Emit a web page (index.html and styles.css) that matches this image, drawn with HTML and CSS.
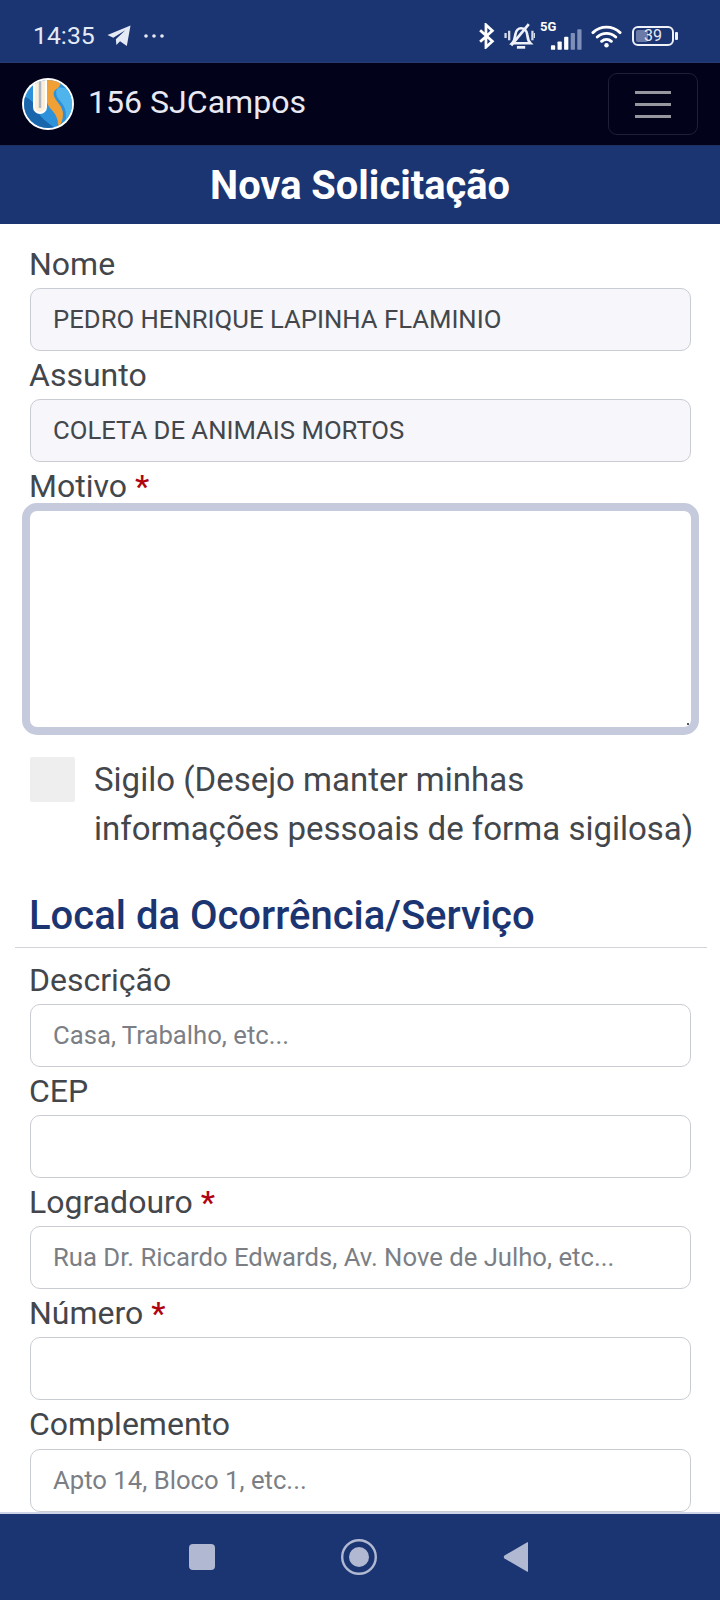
FILE: index.html
```html
<!DOCTYPE html>
<html lang="pt-BR">
<head>
<meta charset="utf-8">
<title>Nova Solicitação</title>
<link rel="stylesheet" href="styles.css">
</head>
<body>
<div class="screen">
  <div class="status">
    <div class="status-left">
      <span class="time">14:35</span>
      <svg class="ic-tg" viewBox="0 0 24 22"><path d="M1 10.5 23 1.5 19.5 21 13 16.5 9.5 20 9 14.5 18 6 6.5 13.2Z" fill="#e6eaf5"/></svg>
      <svg class="ic-dots" viewBox="0 0 22 6"><circle cx="3" cy="3" r="1.8" fill="#e6eaf5"/><circle cx="11" cy="3" r="1.8" fill="#e6eaf5"/><circle cx="19" cy="3" r="1.8" fill="#e6eaf5"/></svg>
    </div>
    <div class="status-right">
      <svg class="ic-bt" viewBox="0 0 16 24"><path d="M2 6.5 13.5 17 7.5 22.5V1.5L13.5 7 2 17.5" fill="none" stroke="#fff" stroke-width="2.6"/></svg>
      <svg class="ic-bell" viewBox="0 0 30 26"><path d="M8 20c2.500-2.500 2.500-5.500 3-8.500.6-3.500 3-6 5.500-6 3 0 5.500 2.500 6 6 .5 3 .5 6 3 8.500Z" fill="none" stroke="#eef1f8" stroke-width="2.600"/><path d="M12.500 24h8" stroke="#eef1f8" stroke-width="2.600"/><path d="M7 22 24 1.500" stroke="#eef1f8" stroke-width="2.600"/><path d="M5 8v9M1.500 10v5M27.500 8v9M30 10v5" stroke="#d5dbea" stroke-width="2.200"/></svg>
      <div class="net">
        <span class="net-label">5G</span>
        <svg class="ic-signal" viewBox="0 0 34 22"><rect x="1" y="17" width="4.500" height="5" rx="1" fill="#fff"/><rect x="8" y="13" width="4.500" height="9" rx="1" fill="#fff"/><rect x="15" y="8" width="4.500" height="14" rx="1" fill="#fff"/><rect x="22" y="4" width="4.500" height="18" rx="1" fill="#7f8fb8"/><rect x="29" y="0" width="4.500" height="22" rx="1" fill="#7f8fb8"/></svg>
      </div>
      <svg class="ic-wifi" viewBox="0 0 32 24"><path d="M2 8.500c8-7.500 20-7.500 28 0M6.500 13c5.500-5 13.500-5 19 0M11 17.500c3-2.700 7-2.700 10 0" fill="none" stroke="#fff" stroke-width="3" stroke-linecap="round"/><circle cx="16" cy="21.500" r="2.300" fill="#fff"/></svg>
      <div class="battery">
        <div class="battery-body"><span class="battery-level"></span><span class="battery-num">39</span></div>
        <span class="battery-tip"></span>
      </div>
    </div>
  </div>

  <nav class="navbar">
    <div class="brand">
      <svg class="logo" viewBox="0 0 52 52">
        <defs><clipPath id="logo-clip"><circle cx="26" cy="26" r="24"/></clipPath></defs>
        <circle cx="26" cy="26" r="26" fill="#fff"/>
        <g clip-path="url(#logo-clip)">
          <rect width="52" height="52" fill="#2d92da"/>
          <path d="M0 18C8 20 12 24 16 34 20 42 28 46 36 52H0Z" fill="#1a66ad"/>
          <path d="M24 0H39C40 4 38 8 36 10 32 12 31 15 32 18 34 24 41 28 41 36 41 42 39 46 36 50 37 42 34 36 28 30 24 25 23 18 24 12Z" fill="#f0a034"/>
          <path d="M36 10C44 8 51 14 51 24 51 34 48 42 42 48 46 38 44 30 39 24 35 20 32 14 36 10Z" fill="#4fb4ec"/>
          <path d="M12 1V29A6 6 0 0 0 24 29V1Z" fill="#fbeed8" stroke="#fff" stroke-width="2"/>
          <path d="M18 2V30" stroke="#aeb8c4" stroke-width="2.500"/>
        </g>
      </svg>
      <span class="brand-name">156 SJCampos</span>
    </div>
    <div class="toggler">
      <span class="bar"></span><span class="bar"></span><span class="bar"></span>
    </div>
  </nav>

  <header class="title-bar"><h1 class="title">Nova Solicitação</h1></header>

  <main class="form">
    <div class="field">
      <label class="label">Nome</label>
      <div class="input input-ro">PEDRO HENRIQUE LAPINHA FLAMINIO</div>
    </div>
    <div class="field">
      <label class="label">Assunto</label>
      <div class="input input-ro">COLETA DE ANIMAIS MORTOS</div>
    </div>
    <div class="field">
      <label class="label">Motivo <span class="req">*</span></label>
      <div class="textarea"><span class="grip"></span></div>
    </div>
    <div class="check-row">
      <span class="check"></span>
      <span class="check-text">Sigilo (Desejo manter minhas informações pessoais de forma sigilosa)</span>
    </div>
    <h2 class="section">Local da Ocorrência/Serviço</h2>
    <div class="field">
      <label class="label">Descrição</label>
      <div class="input input-ph">Casa, Trabalho, etc...</div>
    </div>
    <div class="field">
      <label class="label">CEP</label>
      <div class="input"></div>
    </div>
    <div class="field">
      <label class="label">Logradouro <span class="req">*</span></label>
      <div class="input input-ph">Rua Dr. Ricardo Edwards, Av. Nove de Julho, etc...</div>
    </div>
    <div class="field">
      <label class="label">Número <span class="req">*</span></label>
      <div class="input"></div>
    </div>
    <div class="field">
      <label class="label">Complemento</label>
      <div class="input input-ph">Apto 14, Bloco 1, etc...</div>
    </div>
  </main>

  <footer class="sysnav">
    <span class="nav-square"></span>
    <svg class="nav-circle" viewBox="0 0 36 36"><circle cx="18" cy="18" r="16.800" fill="none" stroke="#b1b9d2" stroke-width="2.400"/><circle cx="18" cy="18" r="10" fill="#b1b9d2"/></svg>
    <svg class="nav-back" viewBox="0 0 25 30"><path d="M25 0V30L23 29 1.500 16.500Q0 15 1.500 13.500L23 1Z" fill="#b1b9d2"/></svg>
  </footer>
</div>
</body>
</html>
```

FILE: styles.css
```css
* { box-sizing: border-box; }
html, body { margin: 0; padding: 0; background: #fff; }
body { font-family: Roboto, "Liberation Sans", sans-serif; }
.screen { width: 720px; height: 1600px; display: flex; flex-direction: column; overflow: hidden; }

.status { height: 62px; flex: none; background: #1b3572; display: flex; justify-content: space-between; align-items: center; padding: 9px 42px 0 33px; color: #e6eaf5; }
.status-left { display: flex; align-items: center; }
.time { font-size: 24.800px; font-weight: 400; }
.ic-tg { width: 26px; height: 23px; margin-left: 11px; }
.ic-dots { width: 22px; height: 6px; margin-left: 11px; }
.status-right { display: flex; align-items: center; }
.ic-bt { width: 17px; height: 26px; }
.ic-bell { width: 31px; height: 28px; margin-left: 9px; }
.net { position: relative; width: 42px; height: 28px; margin-left: 5px; }
.net-label { position: absolute; left: 0; top: -3px; font-size: 13px; font-weight: 700; color: #fff; }
.ic-signal { position: absolute; right: 0; bottom: 0; width: 32px; height: 21px; }
.ic-wifi { width: 31px; height: 24px; margin-left: 9px; }
.battery { display: flex; align-items: center; margin-left: 10px; }
.battery-body { position: relative; width: 42px; height: 20px; border: 2px solid #eef1f8; border-radius: 6px; display: flex; align-items: center; justify-content: center; }
.battery-level { position: absolute; left: 2px; top: 2px; bottom: 2px; width: 12px; background: #6b7aa6; border-radius: 2px; }
.battery-num { position: relative; font-size: 16px; color: #e6eaf5; line-height: 1; }
.battery-tip { width: 3px; height: 8px; margin-left: 1px; background: #eef1f8; border-radius: 1px; }

.navbar { height: 84px; flex: none; background: #02021a; display: flex; align-items: center; justify-content: space-between; padding: 0 22px; border-top: 1px solid #2a3a70; border-bottom: 1px solid #1f2f60; }
.brand { display: flex; align-items: center; gap: 14px; }
.logo { width: 52px; height: 52px; }
.brand-name { font-size: 32.100px; color: #e8e9f2; position: relative; top: -2px; }
.toggler { width: 90px; height: 62px; border: 1px solid #1e2036; border-radius: 9px; display: flex; flex-direction: column; align-items: center; justify-content: center; gap: 9px; }
.bar { width: 36px; height: 3px; background: #96969f; }

.title-bar { height: 78px; flex: none; background: #1b3572; display: flex; align-items: center; justify-content: center; padding-top: 2px; }
.title { margin: 0; font-size: 39.800px; font-weight: 700; color: #fff; line-height: 1.2; }

.form { flex: 1; min-height: 0; padding: 15.600px 14px 0 15px; display: flex; flex-direction: column; overflow: hidden; }
.field { display: flex; flex-direction: column; padding: 0 15px; }
.label { font-size: 32px; line-height: 48.200px; color: #43474c; margin-left: -1px; }
.req { color: #b00510; font-weight: 500; }
.input { height: 63px; flex: none; border: 1px solid #c9ccd2; border-radius: 10px; padding: 0 22px 1px; display: flex; align-items: center; font-size: 25.700px; background: #fff; color: #43474c; white-space: nowrap; }
.input-ro { background: #f6f6fb; }
.input-ph { color: #7b7f85; }
.textarea { position: relative; height: 232px; margin: -7.600px -8px 0; border: 8px solid #c5cbdc; border-radius: 15px; background: #fff; }
.grip { position: absolute; right: 2px; bottom: 2px; width: 2px; height: 2px; background: #55585e; }
.check-row { display: flex; align-items: flex-start; gap: 19px; padding: 0 15px; margin-top: 22px; }
.check { width: 45px; height: 45px; flex: none; background: #eeeeee; border-radius: 2px; }
.check-text { font-size: 33px; line-height: 49px; color: #43474c; flex: 1; margin: -2px -20px 0 0; }
.section { margin: 37.500px -1px 0 0; padding: 0 14px 5px; font-size: 40px; font-weight: 500; line-height: 52px; color: #1b3572; border-bottom: 1px solid #d2d4d8; }
.section + .field { margin-top: 7.500px; }

.sysnav { height: 88px; flex: none; background: #1b3572; border-top: 2px solid #cfd5e8; display: flex; align-items: center; padding-left: 189px; }
.nav-square { width: 26px; height: 26px; background: #b1b9d2; border-radius: 4px; }
.nav-circle { width: 36px; height: 36px; margin-left: 126px; }
.nav-back { width: 25px; height: 30px; margin-left: 126px; }
```
